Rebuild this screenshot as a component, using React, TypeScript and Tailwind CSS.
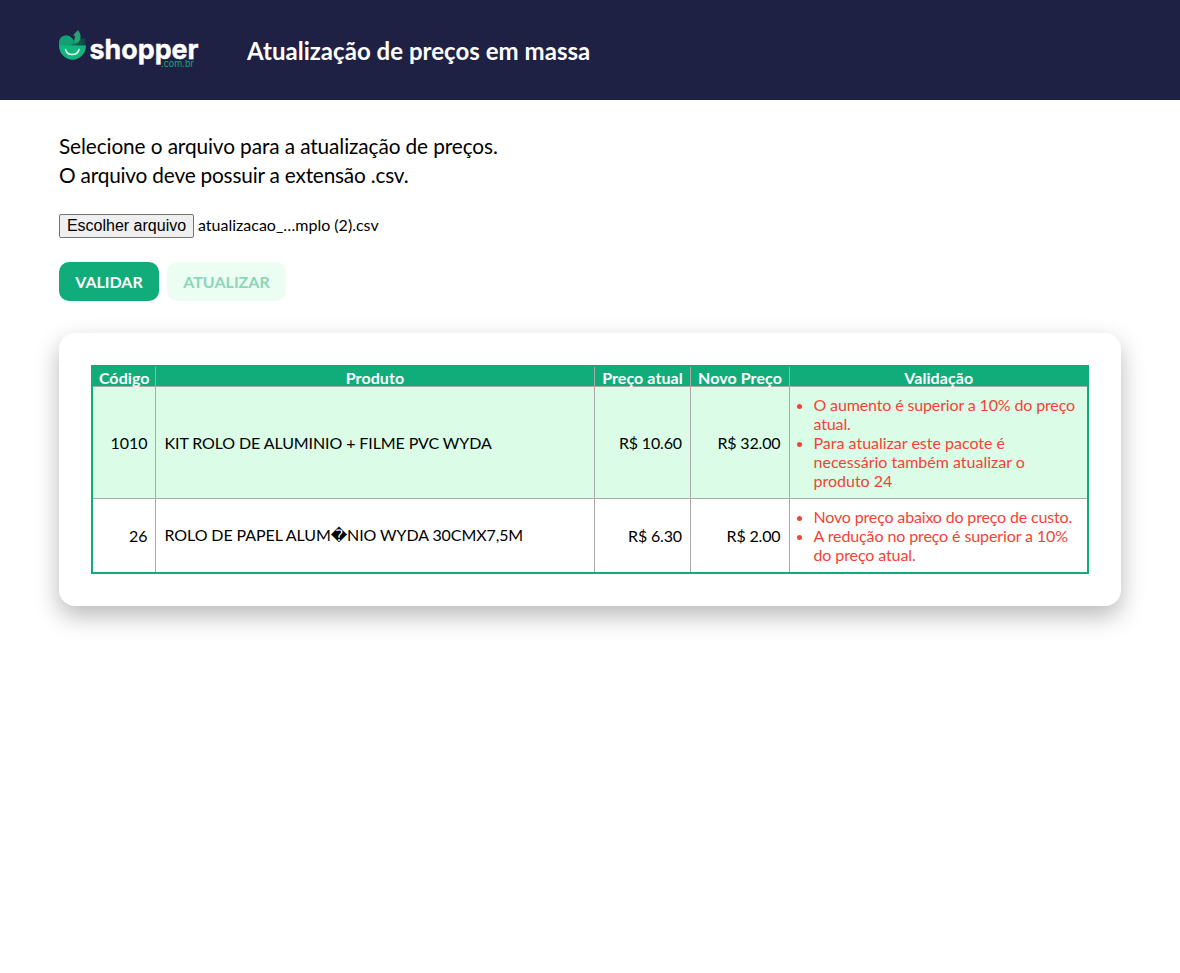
const rows = [
  {
    code: '1010',
    name: 'KIT ROLO DE ALUMINIO + FILME PVC WYDA',
    nameStyle: 'tracking-[-0.1px]',
    current: 'R$ 10.60',
    next: 'R$ 32.00',
    issues: [
      { text: 'O aumento é superior a 10% do preço atual.', tracking: 'tracking-[-0.14px]' },
      { text: 'Para atualizar este pacote é necessário também atualizar o produto 24', tracking: 'tracking-normal' },
    ],
  },
  {
    code: '26',
    name: 'ROLO DE PAPEL ALUM\uFFFDNIO WYDA 30CMX7,5M',
    nameStyle: 'tracking-[-0.09px] pb-0.5',
    current: 'R$ 6.30',
    next: 'R$ 2.00',
    issues: [
      { text: 'Novo preço abaixo do preço de custo.', tracking: 'tracking-[-0.16px]' },
      { text: 'A redução no preço é superior a 10% do preço atual.', tracking: 'tracking-[-0.11px]' },
    ],
  },
];

function Logo() {
  return (
    <svg width="140" height="40" viewBox="0 0 140 40" role="img" aria-label="shopper.com.br">
      <defs>
        <linearGradient id="leaf" x1="0" y1="1" x2="0.6" y2="0">
          <stop offset="0" stopColor="#0a6a54" />
          <stop offset="0.5" stopColor="#22a873" />
          <stop offset="1" stopColor="#2f9a72" />
        </linearGradient>
        <linearGradient id="shade" x1="0" y1="0" x2="1" y2="0">
          <stop offset="0" stopColor="#0c7a5e" />
          <stop offset="1" stopColor="#143f46" />
        </linearGradient>
      </defs>
      <path d="M0 16 V12.500 A7.300 7.300 0 0 1 13 8 L18 16 Z" fill="#12a173" />
      <path d="M12 16 C15 11 20 8 26.500 8.500 V16 Z" fill="url(#shade)" />
      <path d="M10 16 C14 14 16 10.500 15.800 5.500 L13.800 5.500 L19 0 C22 3.500 22.500 8.500 20 11.500 C17.500 14 14 14.500 10 16 Z" fill="url(#leaf)" />
      <path d="M0 15.500 H27 A13.500 14.200 0 0 1 0 15.500 Z" fill="#12b67d" />
      <path d="M6.500 19.500 A6.900 6.300 0 0 0 20 19.500" fill="none" stroke="#e9fff6" strokeWidth="1.500" strokeLinecap="round" />
      <text
        x="30.500"
        y="28.500"
        textLength="109"
        lengthAdjust="spacingAndGlyphs"
        className="fill-white stroke-white stroke-[0.4px] font-['Inter',sans-serif] text-[27px] font-bold"
      >
        shopper
      </text>
      <text x="102" y="37" textLength="33" lengthAdjust="spacingAndGlyphs" className="fill-[#12a97b] font-['Inter',sans-serif] text-[9.5px]">
        .com.br
      </text>
    </svg>
  );
}

export default function App() {
  return (
    <div className="min-h-screen bg-white font-['Lato','DejaVu_Sans',sans-serif] text-base leading-[19px] text-black">
      <header className="flex h-[100px] items-center gap-12 bg-[#1f2144] px-[59px]">
        <Logo />
        <h1 className="pt-0.5 text-2xl font-bold tracking-[0.03px] text-white">Atualização de preços em massa</h1>
      </header>
      <main className="px-[59px] pt-[31px]">
        <p className="text-[20.8px] leading-[29px] tracking-[-0.1px]">
          Selecione o arquivo para a atualização de preços.
          <br />
          <span className="tracking-[-0.19px]">O arquivo deve possuir a extensão .csv.</span>
        </p>
        <div className="mt-[25px] flex h-6 items-start gap-1">
          <button className="h-6 w-[135px] rounded-[2px] border border-[#767676] bg-[#efefef] font-['Liberation_Sans',sans-serif] text-base leading-5 whitespace-nowrap">
            Escolher arquivo
          </button>
          <span className="pt-px">atualizacao_…mplo (2).csv</span>
        </div>
        <div className="mt-6 flex gap-2">
          <button className="h-[39px] w-[100px] rounded-[10px] bg-[#10ac7a] font-bold text-white">VALIDAR</button>
          <button disabled className="h-[39px] w-[119px] rounded-[10px] bg-[#ecfef3] font-bold text-[#8ad6b9]">
            ATUALIZAR
          </button>
        </div>
        <section className="mt-8 rounded-2xl p-8 shadow-[0_10px_24px_rgba(0,0,0,0.28)]">
          <table className="w-full table-fixed border-collapse border-2 border-[#10ac7a]">
            <colgroup>
              <col className="w-[63px]" />
              <col className="w-[439px]" />
              <col className="w-[96px]" />
              <col className="w-[99px]" />
              <col />
            </colgroup>
            <thead>
              <tr className="h-5 bg-[#10ac7a] leading-[17px] text-white">
                {['Código', 'Produto', 'Preço atual', 'Novo Preço', 'Validação'].map((label) => (
                  <th key={label} className="border border-[#a9a9a9] px-0 pt-[1.5px] pb-0 pl-px font-bold tracking-[0.08px]">
                    {label}
                  </th>
                ))}
              </tr>
            </thead>
            <tbody>
              {rows.map((row) => (
                <tr key={row.code} className="odd:bg-[#dbfce7]">
                  <td className="border border-[#a9a9a9] pr-[7px] text-right">{row.code}</td>
                  <td className={`border border-[#a9a9a9] pr-2 pl-[9px] ${row.nameStyle}`}>{row.name}</td>
                  <td className="border border-[#a9a9a9] pr-[7.5px] text-right tracking-[-0.15px]">{row.current}</td>
                  <td className="border border-[#a9a9a9] pr-2 text-right tracking-[-0.15px]">{row.next}</td>
                  <td className="border border-[#a9a9a9] p-2 text-[#f44336]">
                    <ul className="list-disc pl-4">
                      {row.issues.map((issue) => (
                        <li key={issue.text} className={issue.tracking}>
                          {issue.text}
                        </li>
                      ))}
                    </ul>
                  </td>
                </tr>
              ))}
            </tbody>
          </table>
        </section>
      </main>
    </div>
  );
}
